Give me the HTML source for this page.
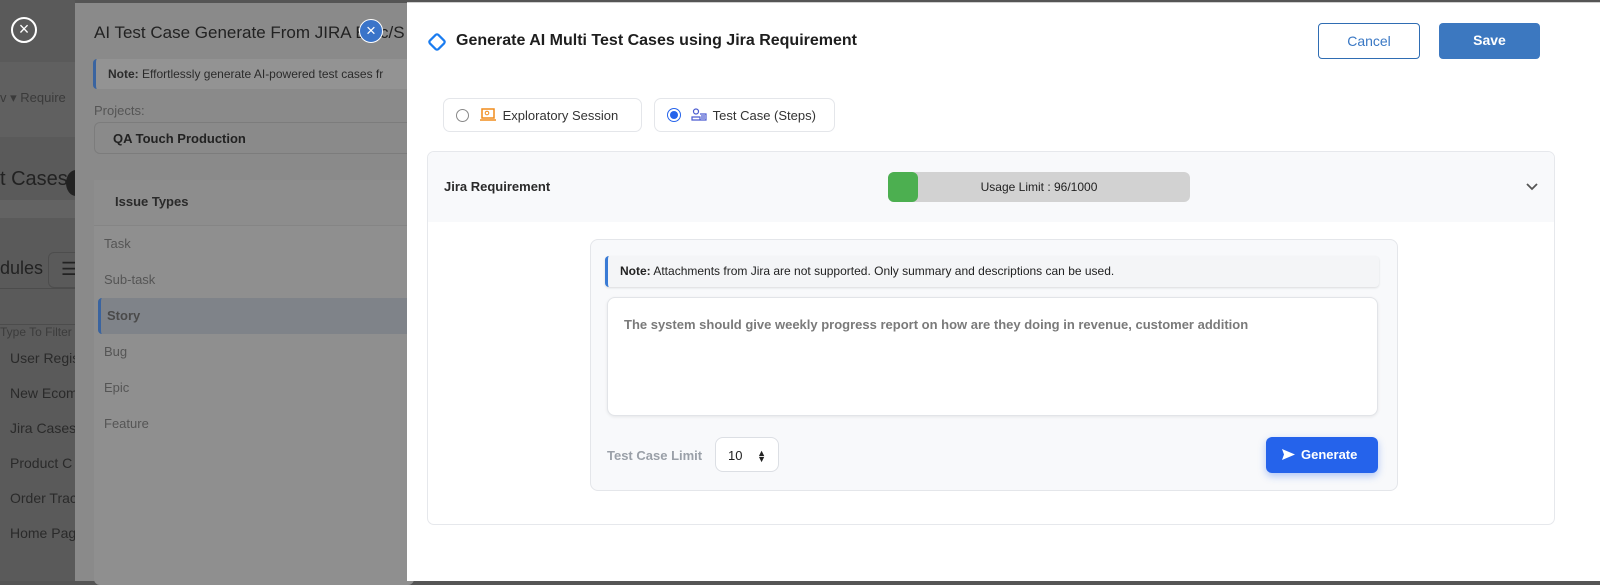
<!DOCTYPE html>
<html><head><meta charset="utf-8"><style>
*{box-sizing:border-box;margin:0;padding:0}
body{width:1600px;height:581px;overflow:hidden;font-family:"Liberation Sans",sans-serif;position:relative;background:#555}
.abs{position:absolute}
#left{left:0;top:0;width:75px;height:581px;background:#5a5a5a;color:#2a2a2a;font-size:14px}
#mid{left:75px;top:3px;width:335px;height:578px;background:#8a8a8a;color:#2b2b2b}
#main{left:407px;top:2px;width:1193px;height:579px;background:#fff;border-top:1px solid #d0d0d0}
.btn{position:absolute;border-radius:4px;font-size:14px;text-align:center;line-height:34px}
</style></head><body>
<div id="left" class="abs">
 <div class="abs" style="left:11px;top:17px;width:26px;height:26px;border:2px solid #fff;border-radius:50%;color:#fff;font-size:18px;line-height:21px;text-align:center">×</div>
 <div class="abs" style="left:0;top:62px;width:75px;height:75px;background:#606060"></div>
 <div class="abs" style="left:0;top:90px;font-size:13px;color:#3a3a3a">v ▾ Require</div>
 <div class="abs" style="left:0;top:168px;font-size:20px;color:#222;white-space:nowrap">t Cases</div>
 <div class="abs" style="left:66px;top:170px;width:20px;height:26px;border-radius:50%;background:#222"></div>
 <div class="abs" style="left:0;top:200px;width:75px;height:18px;background:#636363"></div>
 <div class="abs" style="left:0;top:258px;font-size:18px;color:#222">dules</div>
 <div class="abs" style="left:48px;top:252px;width:40px;height:36px;border:1px solid #4d4d4d;border-radius:6px;color:#222;font-size:18px;padding:6px 12px">☰</div>
 <div class="abs" style="left:0;top:288px;width:75px;height:1px;background:#4c4c4c"></div>
 <div class="abs" style="left:0;top:325px;font-size:12px;color:#3c3c3c;white-space:nowrap">Type To Filter</div>
 <div class="abs" style="left:0;top:324px;width:75px;height:1px;background:#4c4c4c"></div>
 <div class="abs" style="left:10px;top:341px;line-height:35px;white-space:nowrap">User Regis<br>New Ecom<br>Jira Cases<br>Product C<br>Order Trac<br>Home Pag</div>
</div>
<div id="mid" class="abs">
 <div class="abs" style="left:19px;top:20px;font-size:17px;color:#222;white-space:nowrap">AI Test Case Generate From JIRA Epic/S</div>
 <div class="abs" style="left:18px;top:56px;width:330px;height:30px;background:#939393;border-left:3px solid #3a64a0;border-radius:4px;font-size:12px;padding:8px 12px;white-space:nowrap"><b>Note:</b> Effortlessly generate AI-powered test cases fr</div>
 <div class="abs" style="left:19px;top:100px;font-size:13px;color:#555">Projects:</div>
 <div class="abs" style="left:19px;top:119px;width:330px;height:32px;border:1px solid #7c7c7c;border-radius:6px;font-size:13px;font-weight:bold;padding:8px 18px;color:#222">QA Touch Production</div>
 <div class="abs" style="left:19px;top:177px;width:320px;height:405px;background:#8f8f8f;border-radius:6px">
  <div style="height:46px;padding:14px 21px;font-size:13px;font-weight:bold;color:#2a2a2a;background:#8d8d8d;border-bottom:1px solid #858585">Issue Types</div>
  <div style="font-size:13px;color:#555;line-height:36px;padding-left:10px">Task<br>Sub-task<br><div style="margin-left:-6px;padding-left:6px;background:#7f8389;border-left:3px solid #3a64a0;border-radius:4px;font-weight:bold;color:#4a4a4a">Story</div>Bug<br>Epic<br>Feature</div>
 </div>
 <div class="abs" style="left:284px;top:16px;width:24px;height:24px;border-radius:50%;background:#3a74c9;border:1px solid #fff;color:#fff;font-size:17px;line-height:21px;text-align:center">×</div>
</div>
<div id="main" class="abs">
 <svg class="abs" style="left:19px;top:28px" width="22" height="22" viewBox="0 0 22 22"><rect x="5" y="5" width="12" height="12" rx="2" transform="rotate(45 11 11)" fill="none" stroke="#1a7cf0" stroke-width="2.2"/></svg>
 <div class="abs" style="left:49px;top:29px;font-size:16px;font-weight:bold;color:#1e1e1e">Generate AI Multi Test Cases using Jira Requirement</div>
 <div class="btn" style="left:911px;top:20px;width:102px;height:36px;border:1px solid #2f6db3;color:#3a78c4">Cancel</div>
 <div class="btn" style="left:1032px;top:20px;width:101px;height:36px;background:#3c78c0;color:#fff;font-weight:bold">Save</div>
 <div class="abs" style="left:36px;top:95px;width:199px;height:34px;border:1px solid #e4e6ea;border-radius:7px;font-size:13px;color:#333;padding:9px 0 0 12px;white-space:nowrap">
  <span style="display:inline-block;width:13px;height:13px;border:1px solid #888;border-radius:50%;vertical-align:-2px"></span>
  <svg width="18" height="14" viewBox="0 0 18 14" style="vertical-align:-2px;margin:0 6px 0 6px"><rect x="3" y="1" width="12" height="9" fill="none" stroke="#f08c1c" stroke-width="1.5"/><path d="M1 12h16" stroke="#f08c1c" stroke-width="1.5"/><circle cx="8" cy="5" r="1.8" fill="none" stroke="#f08c1c"/></svg>Exploratory Session</div>
 <div class="abs" style="left:247px;top:95px;width:181px;height:34px;border:1px solid #e4e6ea;border-radius:7px;font-size:13px;color:#333;padding:9px 0 0 12px;white-space:nowrap">
  <span style="display:inline-block;width:14px;height:14px;border:1px solid #2563eb;border-radius:50%;vertical-align:-2px;position:relative"><span style="position:absolute;left:2px;top:2px;width:8px;height:8px;border-radius:50%;background:#2563eb"></span></span>
  <svg width="16" height="14" viewBox="0 0 16 14" style="vertical-align:-2px;margin:0 6px 0 6px"><circle cx="5" cy="3.5" r="2.5" fill="none" stroke="#4a5bd0" stroke-width="1.2"/><path d="M1 12v-3h8v3zM9 6h6v6H9M10 8h4M10 10h4" fill="none" stroke="#4a5bd0" stroke-width="1.2"/></svg>Test Case (Steps)</div>
 <div class="abs" style="left:20px;top:148px;width:1128px;height:374px;border:1px solid #e6e8ec;border-radius:7px;overflow:hidden">
  <div style="height:70px;background:#f8f9fb;position:relative">
   <div class="abs" style="left:16px;top:27px;font-size:13px;font-weight:bold;color:#2a2a2a">Jira Requirement</div>
   <div class="abs" style="left:460px;top:20px;width:302px;height:30px;background:#d2d2d2;border-radius:6px;font-size:12px;color:#222;text-align:center;line-height:30px">
    <div class="abs" style="left:0;top:0;width:30px;height:30px;background:#4caf50;border-radius:6px"></div>Usage Limit : 96/1000</div>
   <svg class="abs" style="left:1097px;top:30px" width="14" height="10" viewBox="0 0 14 10"><path d="M2 2l5 5 5-5" fill="none" stroke="#555" stroke-width="1.8"/></svg>
  </div>
  <div class="abs" style="left:162px;top:87px;width:808px;height:252px;background:#f8f9fb;border:1px solid #e4e6ea;border-radius:8px">
   <div class="abs" style="left:14px;top:16px;width:774px;height:31px;background:#f4f5f7;border-left:3px solid #3a7bd5;border-radius:4px;box-shadow:0 1px 2px rgba(0,0,0,.12);font-size:12px;color:#222;padding:8px 12px;white-space:nowrap"><b>Note:</b> Attachments from Jira are not supported. Only summary and descriptions can be used.</div>
   <div class="abs" style="left:16px;top:57px;width:771px;height:119px;background:#fff;border:1px solid #e2e4e8;border-radius:8px;box-shadow:0 1px 3px rgba(0,0,0,.08);font-size:13px;font-weight:bold;color:#7a7a7a;padding:19px 16px;white-space:nowrap">The system should give weekly progress report on how are they doing in revenue, customer addition</div>
   <div class="abs" style="left:16px;top:208px;font-size:13px;font-weight:bold;color:#9aa0a8">Test Case Limit</div>
   <div class="abs" style="left:124px;top:197px;width:64px;height:35px;background:#fff;border:1px solid #dcdfe4;border-radius:8px;font-size:13px;color:#222;padding:10px 12px">10 <span style="float:right;font-size:9px;line-height:6px;margin-top:2px">▲<br>▼</span></div>
   <div class="abs" style="left:675px;top:197px;width:112px;height:36px;background:#2563eb;border-radius:6px;box-shadow:0 3px 8px rgba(37,99,235,.35);color:#fff;font-size:13px;font-weight:bold;line-height:36px;padding-left:15px">
    <svg width="15" height="13" viewBox="0 0 15 13" style="vertical-align:-2px;margin-right:5px"><path d="M1 1l13 5.5L1 12l2-5.5z" fill="#fff"/></svg>Generate</div>
  </div>
 </div>
</div>
</body></html>
